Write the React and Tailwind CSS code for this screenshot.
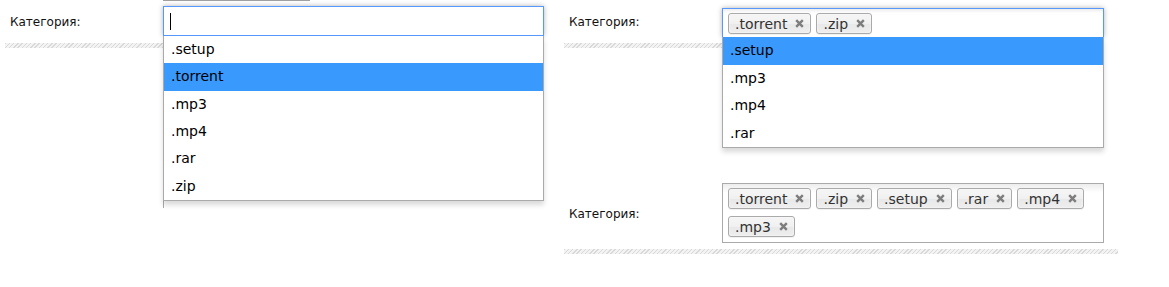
import React from "react";

const stripe =
  "bg-[image:repeating-linear-gradient(135deg,#d9d9d9_0px,#d9d9d9_1px,#f3f3f3_1px,#f3f3f3_3px)]";

function XIcon() {
  return (
    <svg width="9" height="9" viewBox="0 0 9 9" className="ml-[8px] shrink-0">
      <path d="M1.2 1.2 L7.8 7.8 M7.8 1.2 L1.2 7.8" stroke="#7d7d7d" strokeWidth="2.4" strokeLinecap="butt" />
    </svg>
  );
}

function Tag({ label }) {
  return (
    <span className="inline-flex items-center h-[21px] ml-[5px] mt-[4px] mb-[3px] pl-[6px] pr-[6px] border border-[#aaa] rounded-[3px] bg-[linear-gradient(to_bottom,#f4f4f4_20%,#f0f0f0_50%,#e8e8e8_52%,#eee_100%)] shadow-[inset_0_0_2px_#fff,0_1px_0_rgba(0,0,0,0.05)] text-[14px] text-[#333] leading-none">
      {label}
      <XIcon />
    </span>
  );
}

function Item({ label, active, h = "h-[27.3px]" }) {
  return (
    <div
      className={
        "flex items-center pl-[7px] text-[14px] text-black " +
        h +
        (active ? " bg-[#3a99fd]" : " bg-white")
      }
    >
      {label}
    </div>
  );
}

function Label() {
  return (
    <div className="w-[158px] shrink-0 pl-[5px] text-[12px] text-[#111]">Категория:</div>
  );
}

export default function App() {
  return (
    <div className="flex bg-white w-[1169px] h-[287px] font-['DejaVu_Sans',sans-serif]">
      {/* left column */}
      <div className="w-[564px] shrink-0 pl-[5px]">
        <div className="w-[539px]">
          <div className="flex items-center h-[43px]">
            <Label />
            <div className="relative w-[381px] self-stretch">
              <div className="absolute top-0 left-0 w-[147px] h-px bg-[#a0a0a0]" />
              <div className="absolute top-[190px] left-0 w-px h-[18px] bg-[#aaa]" />
              <div className="absolute top-[6px] left-0 w-[381px] z-10">
                <div className="flex items-center h-[30px] border border-[#5897fb] bg-white shadow-[0_0_5px_rgba(0,0,0,0.3)]">
                  <div className="ml-[6px] w-px h-[17px] bg-black" />
                </div>
                <div className="border-x border-b border-[#aaa] bg-white shadow-[0_4px_5px_rgba(0,0,0,0.15)]">
                  <Item label=".setup" />
                  <Item label=".torrent" active />
                  <Item label=".mp3" />
                  <Item label=".mp4" />
                  <Item label=".rar" />
                  <Item label=".zip" />
                </div>
              </div>
            </div>
          </div>
          <div className={"h-[5px] " + stripe} />
        </div>
      </div>

      {/* right column */}
      <div className="w-[554px] shrink-0">
        <div className="w-[540px]">
          <div className="flex items-center h-[43px]">
            <Label />
            <div className="relative w-[382px] self-stretch">
              <div className="absolute top-[8px] left-0 w-[382px] z-10">
                <div className="flex flex-wrap items-start min-h-[29px] border-t border-x border-[#5897fb] bg-[linear-gradient(to_bottom,#eee_1%,#fff_15%)] shadow-[0_0_5px_rgba(0,0,0,0.3)]">
                  <Tag label=".torrent" />
                  <Tag label=".zip" />
                </div>
                <div className="relative border-x border-b border-[#aaa] bg-white shadow-[0_4px_5px_rgba(0,0,0,0.15)]">
                  <Item label=".setup" active h="h-[27.5px]" />
                  <Item label=".mp3" h="h-[27.5px]" />
                  <Item label=".mp4" h="h-[27.5px]" />
                  <Item label=".rar" h="h-[27.5px]" />
                </div>
              </div>
            </div>
          </div>
          <div className={"h-[5px] " + stripe} />
        </div>

        <div className="mt-[130px]">
          <div className="flex items-center">
            <Label />
            <div className="mt-[5px] mb-[6px] w-[382px] min-h-[60px] flex flex-wrap content-start border border-[#aaa] bg-[linear-gradient(to_bottom,#eee_1%,#fff_15%)]">
              <Tag label=".torrent" />
              <Tag label=".zip" />
              <Tag label=".setup" />
              <Tag label=".rar" />
              <Tag label=".mp4" />
              <Tag label=".mp3" />
            </div>
          </div>
          <div className={"h-[5px] w-[554px] " + stripe} />
        </div>
      </div>
    </div>
  );
}
